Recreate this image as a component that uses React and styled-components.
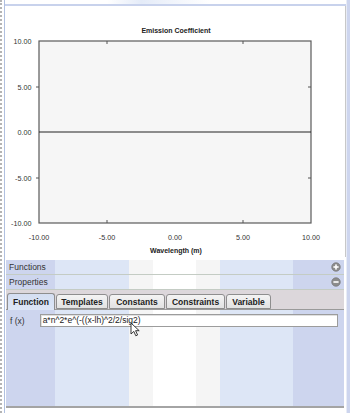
import React from "react";
import styled, { createGlobalStyle } from "styled-components";

const GlobalStyle = createGlobalStyle`
  html, body {
    margin: 0;
    padding: 0;
    background: #ffffff;
    font-family: "Liberation Sans", Arial, sans-serif;
  }
`;

// the vertical colour bands of the lower panel (page x 6 .. 344)
const bands = `linear-gradient(to right,
  #cdd5ee 0px, #cdd5ee 49px,
  #dde6f6 49px, #dde6f6 123px,
  #f5f5f5 123px, #f5f5f5 147px,
  #ffffff 147px, #ffffff 190px,
  #f5f5f5 190px, #f5f5f5 214px,
  #dde6f6 214px, #dde6f6 287px,
  #cdd5ee 287px, #cdd5ee 338px)`;

const Frame = styled.div`
  position: relative;
  width: 350px;
  height: 413px;
  display: flex;
  overflow: hidden;
`;

const DottedRail = styled.div`
  width: 3px;
  margin-right: 1px;
  border-left: 2px dotted #b4b4b4;
  box-sizing: border-box;
`;

const Main = styled.div`
  width: 342px;
  display: flex;
  flex-direction: column;
  border-left: 1px solid #b0c0e0;
  box-sizing: border-box;
`;

const RightRail = styled.div`
  width: 4px;
  background: #cdd5ee;
  border-left: 1px solid #e8ecf6;
  box-sizing: border-box;
`;

const TopStrip = styled.div`
  height: 4px;
  background: linear-gradient(to right, #ffffff 0%, #ffffff 30%, #e4ebf8 40%, #ffffff 60%);
  border-bottom: 2px solid #c8d2ec;
`;

const ChartPanel = styled.div`
  height: 251px;
  background: #ffffff;
  border-right: 1px solid #c8c8c8;
`;

const Lower = styled.div`
  flex: 1;
  display: flex;
  flex-direction: column;
  padding: 3px 2px 0 1px;
`;

const Header = styled.div`
  height: 14px;
  display: flex;
  align-items: center;
  justify-content: space-between;
  padding: 0 3px 0 3px;
  background: ${bands};
  border-bottom: 1px solid #c4ccc4;
  font-size: 8.5px;
  color: #333333;
`;

const HeaderIcon = styled.svg`
  width: 10px;
  height: 10px;
  display: block;
`;

const TabRow = styled.div`
  height: 20px;
  display: flex;
  align-items: flex-end;
  padding-left: 1px;
  background: #dcd7db;
  border-bottom: 1px solid #9a9a9a;
  box-sizing: border-box;
`;

const Tab = styled.div`
  width: ${(p) => p.$w}px;
  height: ${(p) => (p.$active ? "17px" : "15px")};
  margin-right: 1px;
  display: flex;
  align-items: center;
  justify-content: center;
  font-size: 8.5px;
  font-weight: bold;
  color: #222222;
  box-sizing: border-box;
  border: 1px solid #8e8e8e;
  border-bottom: ${(p) => (p.$active ? "none" : "1px solid #8e8e8e")};
  border-radius: 3px 3px 0 0;
  background: ${(p) =>
    p.$active
      ? "linear-gradient(#d4def2, #dde6f6)"
      : "linear-gradient(#f4f4f4, #e2e2e2)"};
  margin-bottom: ${(p) => (p.$active ? "-1px" : "0")};
`;

const Body = styled.div`
  flex: 1;
  background: ${bands};
  border-bottom: 2px solid #a4a4a4;
  margin-bottom: 5px;
  padding: 4px 5px 0 4px;
`;

const FieldRow = styled.div`
  display: flex;
  align-items: center;
  gap: 15px;
`;

const FieldLabel = styled.span`
  font-size: 8.5px;
  color: #333333;
`;

const Input = styled.div`
  width: 298px;
  height: 13px;
  box-sizing: border-box;
  background: #ffffff;
  border: 1px solid #9c9c9c;
  box-shadow: inset 1px 1px 0 #e0e0e0;
  font-size: 8.5px;
  line-height: 11px;
  color: #222222;
  padding-left: 2px;
`;

const Cursor = styled.svg`
  position: absolute;
  left: 130px;
  top: 322px;
  width: 11px;
  height: 15px;
`;

const yTicks = [
  { y: 41, label: "10.00" },
  { y: 87, label: "5.00" },
  { y: 132, label: "0.00" },
  { y: 178, label: "-5.00" },
  { y: 223, label: "-10.00" },
];

const xTicks = [
  { x: 39, label: "-10.00" },
  { x: 107, label: "-5.00" },
  { x: 175, label: "0.00" },
  { x: 243, label: "5.00" },
  { x: 311, label: "10.00" },
];

const tabs = [
  { name: "Function", w: 48, active: true },
  { name: "Templates", w: 52 },
  { name: "Constants", w: 56 },
  { name: "Constraints", w: 59 },
  { name: "Variable", w: 45 },
];

function Chart() {
  return (
    <svg width="341" height="251" viewBox="5 6 341 251" style={{ display: "block" }}>
      <g fontFamily="Liberation Sans, Arial, sans-serif" fill="#222">
        <text x="176" y="32.5" fontSize="7" fontWeight="bold" textAnchor="middle">
          Emission Coefficient
        </text>
        <rect x="39" y="41" width="272" height="182" fill="#f6f6f6" stroke="#5a5a5a" strokeWidth="1.2" />
        <line x1="39" y1="132" x2="311" y2="132" stroke="#222" strokeWidth="1" />
        {yTicks.map((t) => (
          <g key={t.label}>
            {t.y !== 41 && t.y !== 223 && t.y !== 132 && (
              <>
                <line x1="36" y1={t.y} x2="39" y2={t.y} stroke="#555" />
                <line x1="308" y1={t.y} x2="311" y2={t.y} stroke="#555" />
              </>
            )}
            <text x="31.5" y={t.y + 2.5} fontSize="7.2" textAnchor="end" fill="#333">
              {t.label}
            </text>
          </g>
        ))}
        {xTicks.map((t) => (
          <g key={t.label}>
            {t.x !== 39 && t.x !== 311 && t.x !== 175 && (
              <>
                <line x1={t.x} y1="41" x2={t.x} y2="44" stroke="#555" />
                <line x1={t.x} y1="220" x2={t.x} y2="223" stroke="#555" />
              </>
            )}
            <text x={t.x} y="239.5" fontSize="7.2" textAnchor="middle" fill="#333">
              {t.label}
            </text>
          </g>
        ))}
        <text x="176" y="252.5" fontSize="7" fontWeight="bold" textAnchor="middle">
          Wavelength (m)
        </text>
      </g>
    </svg>
  );
}

function ToggleIcon({ open }) {
  return (
    <HeaderIcon viewBox="0 0 10 10">
      <circle cx="5" cy="5" r="4.3" fill="#8c8c8c" stroke="#6e6e6e" strokeWidth="0.6" />
      <rect x="2.4" y="4.2" width="5.2" height="1.6" fill="#ffffff" />
      {!open && <rect x="4.2" y="2.4" width="1.6" height="5.2" fill="#ffffff" />}
    </HeaderIcon>
  );
}

export default function App() {
  return (
    <>
      <GlobalStyle />
      <Frame>
        <DottedRail />
        <Main>
          <TopStrip />
          <ChartPanel>
            <Chart />
          </ChartPanel>
          <Lower>
            <Header>
              <span>Functions</span>
              <ToggleIcon open={false} />
            </Header>
            <Header>
              <span>Properties</span>
              <ToggleIcon open />
            </Header>
            <TabRow>
              {tabs.map((t) => (
                <Tab key={t.name} $w={t.w} $active={t.active}>
                  {t.name}
                </Tab>
              ))}
            </TabRow>
            <Body>
              <FieldRow>
                <FieldLabel>f (x)</FieldLabel>
                <Input>a*n^2*e^(-((x-lh)^2/2/sig2)</Input>
              </FieldRow>
            </Body>
          </Lower>
        </Main>
        <RightRail />
        <Cursor viewBox="0 0 11 15">
          <path d="M1 1 L1 12 L3.8 9.4 L5.8 13.8 L7.6 13 L5.6 8.7 L9.2 8.7 Z" fill="#ffffff" stroke="#222" strokeWidth="0.9" strokeLinejoin="round" />
        </Cursor>
      </Frame>
    </>
  );
}
